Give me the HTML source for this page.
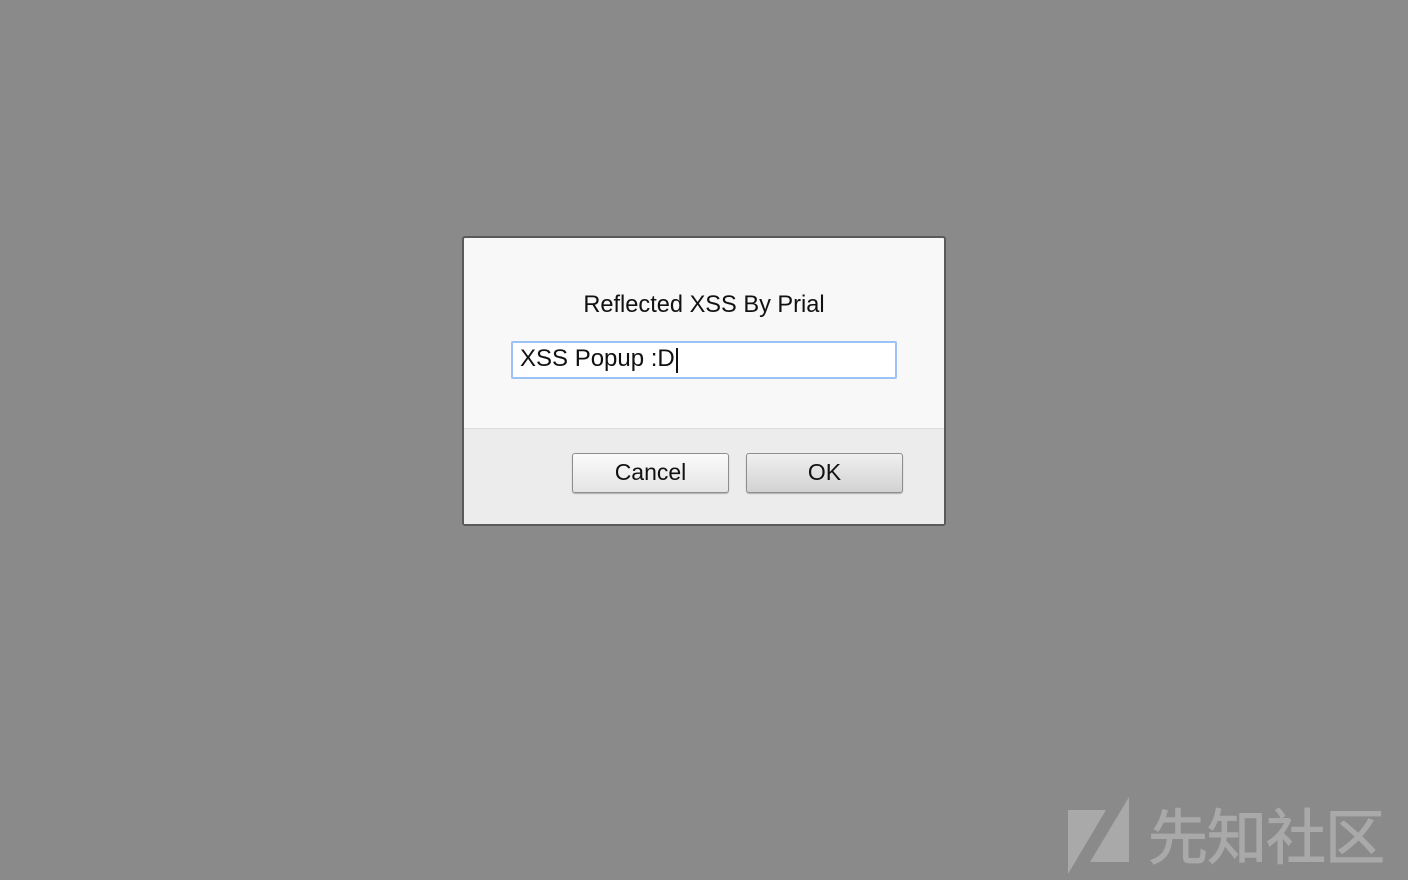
<!DOCTYPE html>
<html><head><meta charset="utf-8"><style>
html,body{margin:0;padding:0;}
body{width:1408px;height:880px;background:#8a8a8a;position:relative;overflow:hidden;font-family:"Liberation Sans",Arial,sans-serif;}
.dlg{position:absolute;left:462px;top:236px;width:480px;height:286px;border:2px solid #5a5a5a;border-radius:3px;background:#f8f8f8;overflow:hidden;}
.bot{position:absolute;left:0;right:0;top:190px;bottom:0;background:#ececec;border-top:1px solid #dcdcdc;}
.msg{position:absolute;left:0;right:0;top:54px;text-align:center;font-size:23.6px;color:#111;}
.inp{position:absolute;left:47px;top:103px;width:382px;height:34px;border:2px solid #9cc3f5;border-radius:2px;background:#fff;}
.inp span{position:absolute;left:7px;top:1px;font-size:24px;color:#111;line-height:30px;}
.inp i{position:absolute;left:163px;top:5px;width:2px;height:25px;background:#111;}
.btn{position:absolute;top:215px;width:155px;height:38px;border:1px solid #8e8e8e;border-radius:3px;background:linear-gradient(#fbfbfb,#e4e4e4);box-shadow:0 1px 1px rgba(0,0,0,.25);text-align:center;font-size:23px;line-height:37px;color:#111;}
.ok{background:linear-gradient(#f0f0f0,#d2d2d2);}
.wm{position:absolute;left:1148px;top:804px;font-family:"Liberation Sans","Noto Sans CJK SC",sans-serif;font-size:60px;line-height:70px;color:#a9a9a9;letter-spacing:-1px;-webkit-text-stroke:1px #a9a9a9;}
</style></head><body>
<div class="dlg">
  <div class="bot"></div>
  <div class="msg">Reflected XSS By Prial</div>
  <div class="inp"><span>XSS Popup :D</span><i></i></div>
  <div class="btn" style="left:108px">Cancel</div>
  <div class="btn ok" style="left:282px">OK</div>
</div>
<svg style="position:absolute;left:0;top:0" width="1408" height="880">
  <polygon points="1068,810 1106,810 1068,874" fill="#a9a9a9"/>
  <polygon points="1129,797 1129,862 1090,862" fill="#a9a9a9"/>
</svg>
<div class="wm">先知社区</div>
</body></html>
